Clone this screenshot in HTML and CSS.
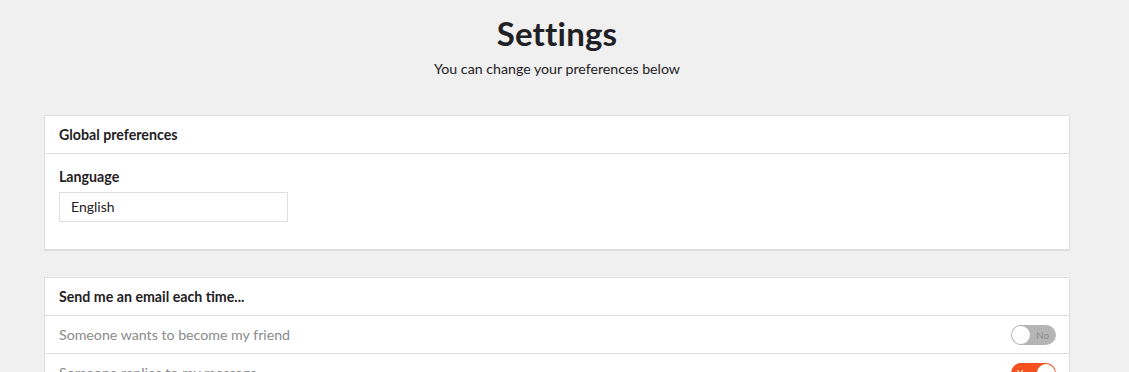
FILE: index.html
```html
<!DOCTYPE html>
<html lang="en">
<head>
  <meta charset="UTF-8" />
  <title>Settings</title>
  <link rel="stylesheet" href="styles.css">
</head>
<body>
  <div class="page">
    <header class="page-head">
      <h1>Settings</h1>
      <p>You can change your preferences below</p>
    </header>

    <section class="card">
      <div class="card-head">Global preferences</div>
      <div class="card-body">
        <label class="field-label" for="lang">Language</label>
        <div class="select" id="lang">English</div>
      </div>
    </section>

    <section class="card">
      <div class="card-head">Send me an email each time...</div>
      <div class="row">
        <span>Someone wants to become my friend</span>
        <span class="toggle off"><span class="knob"></span><span class="toggle-text">No</span></span>
      </div>
      <div class="row">
        <span>Someone replies to my message</span>
        <span class="toggle on"><span class="toggle-text">Yes</span><span class="knob"></span></span>
      </div>
    </section>
  </div>
</body>
</html>
```

FILE: styles.css
```css
* {
  box-sizing: border-box;
}

body {
  margin: 0;
  background: #f0f0f0;
  font-family: Lato, "Noto Sans", sans-serif;
  color: #1f2124;
  overflow: hidden;
}

.page {
  width: 1114px;
  padding: 0 44px;
}

.page-head {
  text-align: center;
  padding-top: 13px;
  margin-bottom: 38px;
}

.page-head h1 {
  margin: 0;
  font-size: 33px;
  line-height: 40px;
  font-weight: 700;
  letter-spacing: 0.2px;
}

.page-head p {
  margin: 8px 0 0;
  font-size: 14.2px;
  line-height: 16px;
}

.card {
  background: #fff;
  border: 1px solid #dedede;
  border-bottom-width: 2px;
  margin-bottom: 26px;
}

.card-head {
  height: 38px;
  line-height: 37px;
  padding: 0 14px;
  font-size: 14.2px;
  font-weight: 700;
  border-bottom: 1px solid #dedede;
}

.card-body {
  padding: 15px 14px 27px;
}

.field-label {
  display: block;
  font-size: 14.2px;
  font-weight: 700;
  line-height: 16px;
  margin-bottom: 7px;
}

.select {
  width: 229px;
  height: 30px;
  line-height: 28px;
  padding: 0 11px;
  border: 1px solid #dedede;
  font-size: 14px;
}

.row {
  display: flex;
  align-items: center;
  justify-content: space-between;
  height: 38px;
  padding: 0 13px 0 14px;
  border-bottom: 1px solid #dedede;
  font-size: 14.2px;
  color: #8a8a8a;
}

.toggle {
  display: flex;
  align-items: center;
  width: 45px;
  height: 20px;
  border-radius: 10px;
  padding: 0 1px;
  font-size: 10px;
}

.toggle.off {
  background: #b5b5b5;
  color: #8e8e8e;
}

.toggle.on {
  background: #f4511e;
  color: #fff;
}

.knob {
  width: 18px;
  height: 18px;
  border-radius: 50%;
  background: #fff;
}

.toggle-text {
  flex: 1;
  text-align: center;
}
```
